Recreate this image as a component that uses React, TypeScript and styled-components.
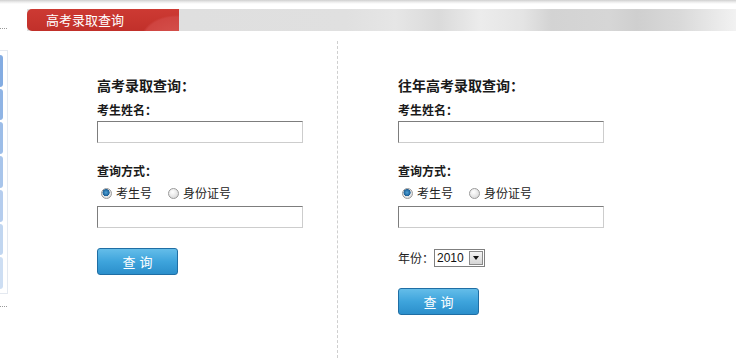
import React, { useState } from "react";
import styled, { createGlobalStyle } from "styled-components";

const GlobalStyle = createGlobalStyle`
  html, body {
    margin: 0;
    padding: 0;
    background: #fff;
  }
  body {
    font-family: "Noto Sans CJK SC", "Liberation Sans", sans-serif;
    color: #222;
    overflow: hidden;
  }
`;

// 페이지 전체
const Page = styled.div`
  width: 736px;
  height: 358px;
  display: flex;
  flex-direction: column;
  overflow: hidden;
`;

const TopShade = styled.div`
  height: 4px;
  flex: 0 0 4px;
  background: linear-gradient(#cfcfcf, #ececec 50%, #fff);
`;

const Frame = styled.div`
  flex: 1;
  display: flex;
`;

// 왼쪽 레일
const Rail = styled.div`
  width: 27px;
  flex: 0 0 27px;
  display: flex;
  flex-direction: column;
`;

const RailDots = styled.div<{ $top: number }>`
  width: 7px;
  margin-top: ${(p) => p.$top}px;
  border-top: 1px dotted #9a9a9a;
`;

const RailPanel = styled.div`
  width: 7px;
  height: 236px;
  margin-top: 21px;
  padding: 3px 0;
  border: 1px solid #e4e9f0;
  border-left: none;
  display: flex;
  flex-direction: column;
`;

const RailTab = styled.div<{ $shade: number }>`
  flex: 1;
  width: 3px;
  border-radius: 0 3px 3px 0;
  margin: 1px 0;
  background: ${(p) => `hsl(214, 62%, ${70 + p.$shade * 3}%)`};
`;

const Main = styled.div`
  flex: 1;
  display: flex;
  flex-direction: column;
`;

// 헤더
const Header = styled.div`
  margin-top: 5px;
  height: 22px;
  display: flex;
  background: linear-gradient(
    90deg,
    #dedede 0%,
    #e0e0e0 45%,
    #e6e6e6 52%,
    #dadada 58%,
    #ececec 64%,
    #e4e4e4 70%,
    #d3d3d3 74%,
    #d6d6d6 82%,
    #cfcfcf 86%,
    #d9d9d9 92%,
    #f2f2f2 100%
  );
`;

const HeaderTab = styled.div`
  width: 152px;
  padding-left: 19px;
  box-sizing: border-box;
  border-radius: 5px 0 0 5px;
  background: radial-gradient(ellipse 60px 40px at 150px 30px, #d5544f 0%, #cf4440 55%, transparent 60%),
    linear-gradient(#cd3a33, #c1302a);
  color: #fff;
  font-size: 13px;
  line-height: 22px;
`;

// 본문
const Content = styled.div`
  flex: 1;
  display: grid;
  grid-template-columns: 310px 1fr;
`;

const Column = styled.div<{ $divided?: boolean }>`
  padding-top: ${(p) => (p.$divided ? 35 : 45)}px;
  margin-top: ${(p) => (p.$divided ? 10 : 0)}px;
  padding-left: ${(p) => (p.$divided ? 60 : 70)}px;
  border-left: ${(p) => (p.$divided ? "1px dashed #cfcfcf" : "none")};
`;

const Form = styled.div`
  display: flex;
  flex-direction: column;
  align-items: flex-start;
`;

const Title = styled.div`
  font-size: 14px;
  font-weight: bold;
  line-height: 18px;
  color: #1a1a1a;
`;

const Label = styled.div<{ $gap: number }>`
  margin-top: ${(p) => p.$gap}px;
  font-size: 12px;
  font-weight: bold;
  line-height: 16px;
  color: #1a1a1a;
`;

const TextInput = styled.input<{ $gap: number }>`
  margin-top: ${(p) => p.$gap}px;
  width: 206px;
  height: 22px;
  box-sizing: border-box;
  border: 1px solid;
  border-color: #7d7d7d #cdcdcd #cdcdcd #7d7d7d;
  padding: 0 4px;
  font-size: 12px;
  outline: none;
`;

const RadioRow = styled.div`
  margin-top: 6px;
  height: 16px;
  display: flex;
  align-items: center;
  padding-left: 4px;
  gap: 16px;
`;

const RadioOption = styled.label`
  display: flex;
  align-items: center;
  gap: 4px;
  font-size: 12px;
  line-height: 16px;
  color: #222;
  cursor: pointer;
`;

const RadioDot = styled.span<{ $on: boolean }>`
  width: 11px;
  height: 11px;
  box-sizing: border-box;
  border-radius: 50%;
  border: 1px solid #9a9a9a;
  background: ${(p) =>
    p.$on
      ? "radial-gradient(circle at 45% 40%, #4fa3d8 0%, #1b5f96 45%, #e8e8e8 52%, #d0d0d0 100%)"
      : "radial-gradient(circle at 40% 35%, #ffffff 0%, #e4e4e4 60%, #cfcfcf 100%)"};
`;

const YearRow = styled.div`
  margin-top: 21px;
  display: flex;
  align-items: center;
  font-size: 12px;
  line-height: 18px;
`;

const SelectBox = styled.div`
  display: flex;
  align-items: stretch;
  height: 18px;
  box-sizing: border-box;
  border: 1px solid #7f7f7f;
  background: #fff;
`;

const SelectValue = styled.span`
  width: 31px;
  padding-left: 2px;
  font-family: "Liberation Sans", sans-serif;
  font-size: 12px;
  line-height: 16px;
  color: #111;
`;

const SelectArrow = styled.span`
  width: 14px;
  margin: 1px;
  box-sizing: border-box;
  border: 1px solid #8a8a8a;
  background: linear-gradient(#f4f4f4, #d6d6d6);
  display: flex;
  align-items: center;
  justify-content: center;
  &:after {
    content: "";
    border-left: 3px solid transparent;
    border-right: 3px solid transparent;
    border-top: 4px solid #111;
  }
`;

const QueryButton = styled.button<{ $gap: number }>`
  margin-top: ${(p) => p.$gap}px;
  width: 81px;
  height: 27px;
  border: 1px solid #1f6ea4;
  border-radius: 3px;
  background: linear-gradient(#64bde9, #3ea4dc 50%, #2b8fcb);
  color: #fff;
  font-family: "Noto Sans CJK SC", sans-serif;
  font-size: 13px;
  letter-spacing: 4px;
  padding: 0 0 0 4px;
  cursor: pointer;
`;

type QueryFormProps = { title: string; withYear?: boolean };

const QueryForm: React.FC<QueryFormProps> = ({ title, withYear }) => {
  const [mode, setMode] = useState<"ksh" | "sfz">("ksh");

  return (
    <Form>
      <Title>{title}</Title>
      <Label $gap={8}>考生姓名：</Label>
      <TextInput $gap={3} type="text" />
      <Label $gap={20}>查询方式：</Label>
      <RadioRow>
        <RadioOption onClick={() => setMode("ksh")}>
          <RadioDot $on={mode === "ksh"} />
          考生号
        </RadioOption>
        <RadioOption onClick={() => setMode("sfz")}>
          <RadioDot $on={mode === "sfz"} />
          身份证号
        </RadioOption>
      </RadioRow>
      <TextInput $gap={5} type="text" />
      {withYear && (
        <YearRow>
          年份：
          <SelectBox>
            <SelectValue>2010</SelectValue>
            <SelectArrow />
          </SelectBox>
        </YearRow>
      )}
      <QueryButton $gap={withYear ? 21 : 20} type="button">
        查询
      </QueryButton>
    </Form>
  );
};

const App: React.FC = () => {
  return (
    <>
      <GlobalStyle />
      <Page>
        <TopShade />
        <Frame>
          <Rail>
            <RailDots $top={24} />
            <RailPanel>
              {[0, 1, 2, 3, 4, 5, 6].map((i) => (
                <RailTab key={i} $shade={i} />
              ))}
            </RailPanel>
            <RailDots $top={12} />
          </Rail>
          <Main>
            <Header>
              <HeaderTab>高考录取查询</HeaderTab>
            </Header>
            <Content>
              <Column>
                <QueryForm title="高考录取查询：" />
              </Column>
              <Column $divided>
                <QueryForm title="往年高考录取查询：" withYear />
              </Column>
            </Content>
          </Main>
        </Frame>
      </Page>
    </>
  );
};

export default App;
